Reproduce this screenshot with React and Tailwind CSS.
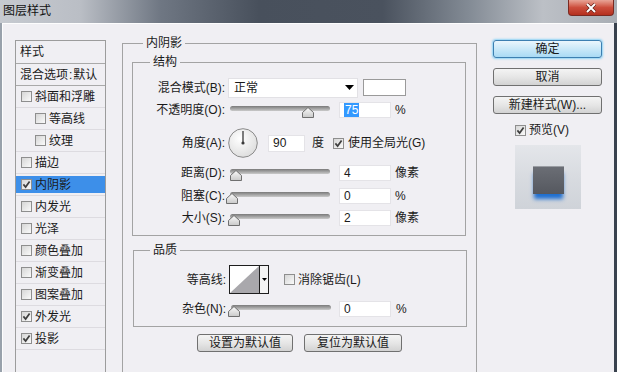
import React from "react";

const layers = [
  { label: "斜面和浮雕" },
  { label: "等高线", sub: true },
  { label: "纹理", sub: true },
  { label: "描边" },
  { label: "内阴影", checked: true, active: true },
  { label: "内发光" },
  { label: "光泽" },
  { label: "颜色叠加" },
  { label: "渐变叠加" },
  { label: "图案叠加" },
  { label: "外发光", checked: true },
  { label: "投影", checked: true },
];

function Check({ checked }) {
  return (
    <span className="w-[11px] h-[11px] shrink-0 border border-[#8e8e8e] bg-gradient-to-br from-[#d6d6d6] to-[#fafafa] flex items-center justify-center">
      {checked && (
        <svg width="9" height="9" viewBox="0 0 9 9">
          <path d="M1.4 4.4 L3.6 7 L7.6 1.4" stroke="#3e3e3e" strokeWidth="1.7" fill="none" />
        </svg>
      )}
    </span>
  );
}

function Slider({ pos }) {
  return (
    <div className="relative w-[100px] h-[12px] mt-[4px] shrink-0">
      <div className="absolute left-0 right-0 top-0 h-[5px] rounded-full bg-gradient-to-b from-[#7a7a7a] to-[#cacaca]" />
      <svg className="absolute top-[1px]" style={{ left: pos - 6 }} width="12" height="11" viewBox="0 0 12 11">
        <defs>
          <linearGradient id="th" x1="0" y1="0" x2="0" y2="1">
            <stop offset="0" stopColor="#fbfbfb" />
            <stop offset="1" stopColor="#c9c9c9" />
          </linearGradient>
        </defs>
        <path d="M6 0.5 L11.5 5.5 L11.5 10.5 L0.5 10.5 L0.5 5.5 Z" fill="url(#th)" stroke="#6f6f6f" />
      </svg>
    </div>
  );
}

function Input({ children, w = "w-[52px]", h = "h-[16px]" }) {
  return (
    <div className={`${w} ${h} bg-white border border-[#e4e3e7] pl-[4px] flex items-center leading-[14px] shrink-0`}>
      {children}
    </div>
  );
}

function Label({ children }) {
  return <div className="w-[95px] pr-[3px] text-right shrink-0">{children}</div>;
}

function Button({ children, w, primary }) {
  return (
    <div
      className={`${w} h-[18px] rounded-[3px] border flex items-center justify-center leading-[16px] ${
        primary
          ? "border-[#3c7fb1] bg-gradient-to-b from-[#eaf6fd] via-[#c9e8f8] to-[#a9daf4] shadow-[0_0_2px_1px_#8fd3f5]"
          : "border-[#707070] bg-gradient-to-b from-[#f4f4f4] via-[#e6e6e6] to-[#d2d2d2]"
      }`}
    >
      {children}
    </div>
  );
}

export default function App() {
  return (
    <div className="w-[617px] h-[372px] overflow-hidden flex flex-col text-[12px] text-[#1a1a1a] font-['Liberation_Sans','Noto_Sans_CJK_SC',sans-serif] bg-[#8f98a3]">
      {/* title bar */}
      <div className="h-[23px] shrink-0 flex justify-between bg-[linear-gradient(to_right,#c6cad0_0%,#babec5_13%,#6f7783_26%,#48505c_42%,#4a525e_62%,#838b95_76%,#bcc0c6_88%,#a9aeb5_100%)]">
        <div className="pl-[3px] pt-[4px] leading-[15px] text-[12px] text-[#111]">图层样式</div>
        <div className="w-[46px] h-[16px] mr-[3px] rounded-b-[4px] border border-[#7a2a22] border-t-0 bg-gradient-to-b from-[#e7a497] via-[#cc4d3c] to-[#b4301f] flex items-center justify-center">
          <svg width="12" height="10" viewBox="0 0 12 10">
            <path d="M2 1 L10 9 M10 1 L2 9" stroke="#5a1a12" strokeWidth="3.2" />
            <path d="M2 1 L10 9 M10 1 L2 9" stroke="#fff" strokeWidth="2" />
          </svg>
        </div>
      </div>

      <div className="flex-1 min-h-0 flex border-l-2 border-l-[#98a1ab] border-r-[3px] border-r-[#39424e]">
        <div className="flex-1 border-t border-l border-[#fdfdfd] bg-[#f0eff3] flex items-start pl-[12px] pt-[11px]">
          {/* left list */}
          <div className="w-[91px] mt-[5px] self-stretch border-l border-r border-t border-[#9c9c9c] flex flex-col shrink-0">
            <div className="h-[23px] border-b border-[#a9a9a9] pl-[4px] flex items-center">样式</div>
            <div className="h-[22px] border-b border-[#a9a9a9] pl-[4px] flex items-center whitespace-nowrap">
              混合选项<span className="mx-[1px]">:</span>默认
            </div>
            {layers.map((l) => (
              <div key={l.label} className="h-[22px] border-b border-[#dddbe0] py-[2px]">
                <div
                  className={`h-full flex items-center gap-[3px] ${l.sub ? "pl-[19px]" : "pl-[5px]"} ${
                    l.active ? "bg-[#3d8fe9]" : ""
                  }`}
                >
                  <Check checked={l.checked} />
                  <span className="leading-[14px]">{l.label}</span>
                </div>
              </div>
            ))}
          </div>

          {/* middle */}
          <fieldset className="ml-[16px] w-[355px] h-[360px] border border-[#a3a3a3] shrink-0">
            <legend className="ml-[20px] px-[3px] leading-[16px]">内阴影</legend>

            <fieldset className="ml-[9px] mt-[3px] w-[334px] border border-[#a3a3a3]">
              <legend className="ml-[17px] px-[3px] leading-[16px]">结构</legend>
              <div className="flex flex-col pt-[7px] pb-[8px]">
                <div className="h-[21px] flex items-center">
                  <Label>混合模式(B):</Label>
                  <div className="w-[130px] h-[20px] bg-white border border-[#e2e1e5] flex items-center justify-between pl-[5px] pr-[3px]">
                    <span>正常</span>
                    <svg width="9" height="5" viewBox="0 0 9 5">
                      <path d="M0 0 L9 0 L4.5 5 Z" fill="#000" />
                    </svg>
                  </div>
                  <div className="ml-[5px] w-[43px] h-[17px] bg-white border border-[#9a9a9a]" />
                </div>

                <div className="mt-[3px] h-[18px] flex items-center">
                  <Label>不透明度(O):</Label>
                  <div className="ml-[2px]"><Slider pos={78} /></div>
                  <div className="ml-[9px]">
                    <Input>
                      <span className="bg-[#3399ff] text-white px-[1px]">75</span>
                    </Input>
                  </div>
                  <span className="ml-[4px]">%</span>
                </div>

                <div className="mt-[8px] h-[32px] flex items-center">
                  <Label>角度(A):</Label>
                  <svg width="30" height="30" viewBox="0 0 30 30" className="shrink-0">
                    <defs>
                      <radialGradient id="dial" cx="0.4" cy="0.35" r="0.7">
                        <stop offset="0" stopColor="#ffffff" />
                        <stop offset="1" stopColor="#dcdcdc" />
                      </radialGradient>
                    </defs>
                    <circle cx="15" cy="15" r="14.3" fill="url(#dial)" stroke="#8a8a8a" />
                    <path d="M15 15 L15 3" stroke="#3a3a3a" strokeWidth="1.3" />
                    <circle cx="15" cy="15" r="1.6" fill="#3a3a3a" />
                  </svg>
                  <div className="ml-[10px]">
                    <Input w="w-[37px]" h="h-[17px]">90</Input>
                  </div>
                  <span className="ml-[7px]">度</span>
                  <span className="ml-[9px]"><Check checked /></span>
                  <span className="ml-[4px]">使用全局光(G)</span>
                </div>

                {[
                  { label: "距离(D):", pos: 6, val: "4", unit: "像素", mt: "mt-[5px]" },
                  { label: "阻塞(C):", pos: 2, val: "0", unit: "%", mt: "mt-[5px]" },
                  { label: "大小(S):", pos: 4, val: "2", unit: "像素", mt: "mt-[4px]" },
                ].map((r) => (
                  <div key={r.label} className={`${r.mt} h-[18px] flex items-center`}>
                    <Label>{r.label}</Label>
                    <div className="ml-[2px]"><Slider pos={r.pos} /></div>
                    <div className="ml-[9px]"><Input>{r.val}</Input></div>
                    <span className="ml-[4px]">{r.unit}</span>
                  </div>
                ))}
              </div>
            </fieldset>

            <fieldset className="ml-[10px] mt-[6px] w-[334px] border border-[#a3a3a3]">
              <legend className="ml-[16px] px-[3px] leading-[16px]">品质</legend>
              <div className="flex flex-col pt-[7px] pb-[8px]">
                <div className="h-[29px] flex items-center">
                  <Label>等高线:</Label>
                  <div className="w-[40px] h-[29px] border border-[#1e1e1e] flex bg-white shrink-0">
                    <svg width="29" height="27" viewBox="0 0 29 27">
                      <path d="M0 27 L29 0 L29 27 Z" fill="#a9a8ac" />
                    </svg>
                    <div className="flex-1 border-l border-[#1e1e1e] flex items-center justify-center bg-[#f4f4f4]">
                      <svg width="5" height="3" viewBox="0 0 5 3">
                        <path d="M0 0 L5 0 L2.5 3 Z" fill="#000" />
                      </svg>
                    </div>
                  </div>
                  <span className="ml-[15px]"><Check /></span>
                  <span className="ml-[3px]">消除锯齿(L)</span>
                </div>
                <div className="mt-[6px] h-[18px] flex items-center">
                  <Label>杂色(N):</Label>
                  <div className="ml-[2px]"><Slider pos={3} /></div>
                  <div className="ml-[8px]"><Input>0</Input></div>
                  <span className="ml-[5px]">%</span>
                </div>
              </div>
            </fieldset>

            <div className="mt-[7px] flex justify-center gap-[11px]">
              <Button w="w-[96px]">设置为默认值</Button>
              <Button w="w-[98px]">复位为默认值</Button>
            </div>
          </fieldset>

          {/* right column */}
          <div className="ml-[16px] mt-[5px] w-[109px] flex flex-col shrink-0">
            <Button w="w-full" primary>确定</Button>
            <div className="mt-[10px]"><Button w="w-full">取消</Button></div>
            <div className="mt-[10px]"><Button w="w-full">新建样式(W)...</Button></div>
            <div className="mt-[9px] h-[14px] pl-[22px] flex items-center gap-[3px]">
              <Check checked />
              <span className="leading-[14px]">预览(V)</span>
            </div>
            <div className="mt-[8px] ml-[22px] w-[66px] h-[64px] bg-gradient-to-b from-[#e4e6ea] via-[#d8dbe0] to-[#cfd3d9] flex justify-center pt-[21px]">
              <div className="w-[31px] h-[28px] bg-gradient-to-b from-[#6b6e75] to-[#55585f] border-t border-[#9a9da3] shadow-[0_6px_4px_-1px_#1f6fd0]" />
            </div>
          </div>
        </div>
      </div>
    </div>
  );
}
